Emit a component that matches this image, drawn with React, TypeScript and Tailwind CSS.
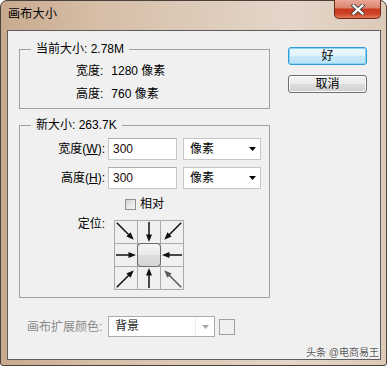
import React from "react";

const font = "font-['Liberation_Sans','Noto_Sans_CJK_SC',sans-serif]";

/** Arrow drawn pointing down, rotated toward the centre cell. */
function Arrow({ rot, diag, light }: { rot: number; diag?: boolean; light?: boolean }) {
  const top = diag ? -2 : 1;
  const tip = diag ? 22 : 21;
  const c = light ? "#5a5a5a" : "#111";
  return (
    <svg width="22" height="22" viewBox="0 0 22 22">
      <g transform={`rotate(${rot} 11 11)`}>
        <line x1="11" y1={top} x2="11" y2={tip - 5} stroke={c} strokeWidth="1.5" />
        <polygon points={`8,${tip - 7.5} 14,${tip - 7.5} 11,${tip}`} fill={c} />
      </g>
    </svg>
  );
}

function Select({ value }: { value: string }) {
  return (
    <div className="ml-[6px] flex h-[22px] w-[78px] items-center justify-between border border-[#c6c6c6] bg-white pl-[6px] pr-[4px]">
      <span className="leading-[20px]">{value}</span>
      <svg width="7" height="4" viewBox="0 0 7 4">
        <path d="M0 0h7L3.5 4z" fill="#000" />
      </svg>
    </div>
  );
}

function SizeRow({ label, hot, value, unit }: { label: string; hot: string; value: string; unit: string }) {
  return (
    <div className="flex h-[22px] items-center">
      <span className="w-[85px] text-right leading-[20px]">
        {label}(<u>{hot}</u>):
      </span>
      <div className="ml-[3px] h-[22px] w-[69px] border border-[#c3c6cc] border-t-[#abadb3] bg-white pl-[4px] leading-[20px] text-[#200808]">
        {value}
      </div>
      <Select value={unit} />
    </div>
  );
}

export default function App() {
  return (
    <div className={`h-[366px] w-[387px] ${font} text-[12px] text-black`}>
      <div className="flex h-full flex-col rounded-t-[7px] rounded-b-[3px] border border-[#4a413a] bg-[linear-gradient(90deg,#c8aa8f_0%,#d6bea7_25%,#dccab9_50%,#e4d6c9_75%,#dccab9_100%)]">
        {/* title bar */}
        <div className="flex h-[29px] items-start justify-between">
          <span className="ml-[7px] mt-[5px] text-[12px] leading-[16px] tracking-[0.3px] text-black">画布大小</span>
          <div className="-mt-px mr-[5px] flex h-[19px] w-[47px] items-center justify-center rounded-b-[5px] border border-t-0 border-[#6b2a1e] bg-[linear-gradient(#e9a898_0%,#dc8670_42%,#c8381c_52%,#cf4426_78%,#e07a5c_100%)]">
            <svg width="14" height="11" viewBox="0 0 14 11">
              <path d="M2.5 1.5L11.5 9.5M11.5 1.5L2.5 9.5" stroke="#4a4a4a" strokeWidth="4" strokeLinecap="square" />
              <path d="M2.5 1.5L11.5 9.5M11.5 1.5L2.5 9.5" stroke="#fff" strokeWidth="2.2" strokeLinecap="square" />
            </svg>
          </div>
        </div>

        {/* client area */}
        <div className="mb-[5px] ml-[6px] mr-[5px] flex flex-1 flex-col border border-[#5c5c5c] bg-[#f0f0f0]">
          <div className="flex">
            <div className="ml-[11px] mt-[11px] w-[251px]">
              <fieldset className="h-[67px] border border-[#a0a0a0]">
                <legend className="ml-[11px] px-[5px] leading-[14px]">当前大小: 2.78M</legend>
                <div className="mt-[5px] flex flex-col gap-[3px] pl-[56px]">
                  <div className="h-[20px] leading-[20px]">
                    宽度:<span className="ml-[8px]">1280 像素</span>
                  </div>
                  <div className="h-[20px] leading-[20px]">
                    高度:<span className="ml-[8px]">760 像素</span>
                  </div>
                </div>
              </fieldset>

              <fieldset className="mt-[9px] h-[180px] border border-[#a0a0a0]">
                <legend className="ml-[11px] px-[5px] leading-[14px]">新大小: 263.7K</legend>
                <div className="mt-[6px] flex flex-col gap-[7px]">
                  <SizeRow label="宽度" hot="W" value="300" unit="像素" />
                  <SizeRow label="高度" hot="H" value="300" unit="像素" />
                </div>
                <div className="mt-[9px] flex h-[12px] items-center pl-[105px]">
                  <div className="h-[11px] w-[11px] border border-[#8e8f8f] bg-[linear-gradient(135deg,#d4d4d4,#f7f7f7)]" />
                  <span className="ml-[4px] leading-[12px]">相对</span>
                </div>
                <div className="mt-[10px] flex items-start">
                  <span className="-mt-[3px] w-[85px] text-right leading-[14px]">定位:</span>
                  <div className="ml-[9px] grid grid-cols-[repeat(3,22px)] grid-rows-[repeat(3,22px)] gap-px bg-[#a9a9a9] p-px">
                    <div className="bg-[#f0f0f0]"><Arrow rot={-45} diag /></div>
                    <div className="bg-[#f0f0f0]"><Arrow rot={0} /></div>
                    <div className="bg-[#f0f0f0]"><Arrow rot={45} diag /></div>
                    <div className="bg-[#f0f0f0]"><Arrow rot={-90} /></div>
                    <div className="relative -m-px h-[24px] w-[24px] rounded-[4px] border border-[#6c6c6c] bg-[linear-gradient(#f4f4f4,#e9e9e9_50%,#dcdcdc_52%,#d6d6d6)]" />
                    <div className="bg-[#f0f0f0]"><Arrow rot={90} /></div>
                    <div className="bg-[#f0f0f0]"><Arrow rot={-135} diag /></div>
                    <div className="bg-[#f0f0f0]"><Arrow rot={180} /></div>
                    <div className="bg-[#f0f0f0]"><Arrow rot={135} diag light /></div>
                  </div>
                </div>
              </fieldset>
            </div>

            <div className="ml-[18px] mt-[16px] flex flex-col gap-[10px]">
              <div className="flex h-[18px] w-[79px] items-center justify-center rounded-[3px] border border-[#2f9ad8] bg-[linear-gradient(#eef8fd,#dff2fc_50%,#c6e8f9_52%,#bde3f6)] leading-[16px] shadow-[inset_0_0_0_1px_#8fd3f5]">
                好
              </div>
              <div className="flex h-[18px] w-[79px] items-center justify-center rounded-[3px] border border-[#707070] bg-[linear-gradient(#f2f2f2,#ebebeb_50%,#dddddd_52%,#cfcfcf)] leading-[16px] shadow-[inset_0_0_0_1px_#fbfbfb]">
                取消
              </div>
            </div>
          </div>

          {/* canvas extension colour (disabled) */}
          <div className="mt-[18px] flex items-center pl-[19px]">
            <span className="w-[81px] leading-[14px] text-[#8b8b8b]">画布扩展颜色:</span>
            <div className="flex h-[21px] w-[107px] items-center border border-[#acacac] bg-white">
              <span className="flex-1 border-r border-[#ededed] pl-[6px] leading-[19px] text-[#222]">背景</span>
              <div className="flex w-[18px] items-center justify-center">
                <svg width="7" height="4" viewBox="0 0 7 4">
                  <path d="M0 0h7L3.5 4z" fill="#a8a8a8" />
                </svg>
              </div>
            </div>
            <div className="ml-[4px] h-[16px] w-[16px] border border-[#a0a0a0] bg-[#f0f0f0]" />
          </div>

          <div className="mr-px mt-auto self-end text-[10px] leading-[12px] text-[#555] [text-shadow:0_0_2px_#fff,0_0_1px_#fff]">
            头条 @电商易王
          </div>
        </div>
      </div>
    </div>
  );
}
